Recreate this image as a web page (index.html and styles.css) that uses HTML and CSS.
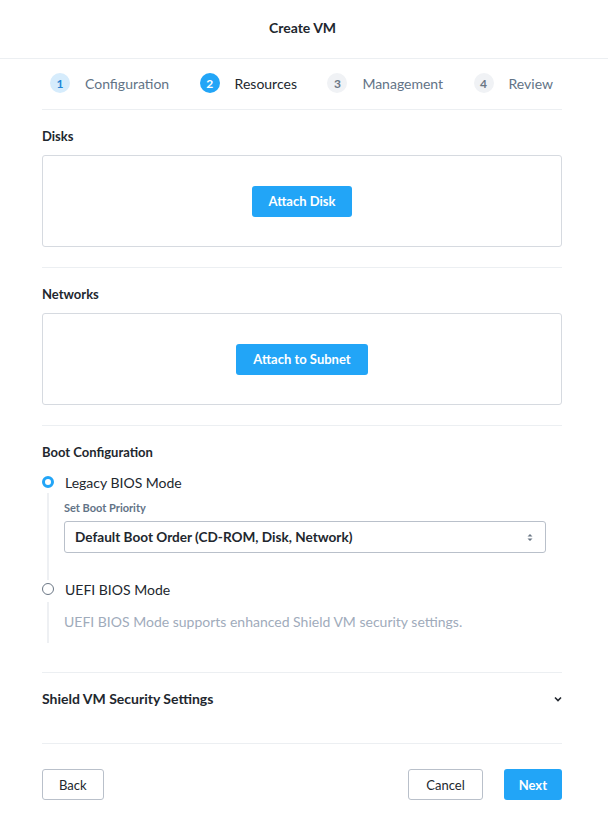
FILE: index.html
```html
<!DOCTYPE html>
<html>
<head>
<meta charset="utf-8">
<link rel="stylesheet" href="styles.css">
</head>
<body>
<div class="modal">
  <header class="title">Create VM</header>
  <div class="content">
    <nav class="steps">
      <div class="step done"><span class="num">1</span><span class="label">Configuration</span></div>
      <div class="step active"><span class="num">2</span><span class="label">Resources</span></div>
      <div class="step"><span class="num">3</span><span class="label">Management</span></div>
      <div class="step"><span class="num">4</span><span class="label">Review</span></div>
    </nav>

    <section class="section">
      <h3 class="heading">Disks</h3>
      <div class="box"><button class="btn primary">Attach Disk</button></div>
    </section>

    <section class="section">
      <h3 class="heading">Networks</h3>
      <div class="box"><button class="btn primary">Attach to Subnet</button></div>
    </section>

    <section class="section boot">
      <h3 class="heading">Boot Configuration</h3>
      <div class="radio-row"><span class="radio checked"></span><span class="radio-label">Legacy BIOS Mode</span></div>
      <div class="radio-body legacy">
        <div class="field-label">Set Boot Priority</div>
        <div class="select">
          <span>Default Boot Order (CD-ROM, Disk, Network)</span>
          <svg class="sel-arrows" width="6" height="9" viewBox="0 0 6 9"><path d="M0.5 3.5 L3 1 L5.5 3.5 Z M0.5 5.5 L3 8 L5.5 5.5 Z" fill="#6b7785"/></svg>
        </div>
      </div>
      <div class="radio-row uefi"><span class="radio"></span><span class="radio-label">UEFI BIOS Mode</span></div>
      <div class="radio-body desc">UEFI BIOS Mode supports enhanced Shield VM security settings.</div>
    </section>

    <section class="collapse">
      <span class="heading">Shield VM Security Settings</span>
      <svg class="chev" width="8" height="6" viewBox="0 0 8 6"><path d="M1 1.5 L4 4.5 L7 1.5" fill="none" stroke="#22272e" stroke-width="1.6"/></svg>
    </section>

    <footer class="footer">
      <button class="btn outline back">Back</button>
      <div class="right">
        <button class="btn outline">Cancel</button>
        <button class="btn primary next">Next</button>
      </div>
    </footer>
  </div>
</div>
</body>
</html>
```

FILE: styles.css
```css
* { box-sizing: border-box; }
html, body { margin: 0; padding: 0; background: #fff; }
body {
  font-family: Lato, "Open Sans", Arial, sans-serif;
  color: #22272e;
  font-size: 14px;
}
.modal { width: 608px; }
.title {
  height: 59px;
  border-bottom: 1px solid #eceff2;
  display: flex;
  align-items: center;
  justify-content: center;
  font-weight: 700;
  font-size: 14px;
  padding-bottom: 4px;
  padding-right: 3px;
}
.content { padding: 0 46px 0 42px; }
.steps {
  display: flex;
  justify-content: space-between;
  align-items: center;
  height: 51px;
  padding: 0 9px 2px 8px;
  border-bottom: 1px solid #eceff2;
}
.step { display: flex; align-items: center; gap: 15px; }
.num {
  width: 20px; height: 20px;
  border-radius: 50%;
  display: flex; align-items: center; justify-content: center;
  font-size: 12px; font-weight: 700;
  background: #f0f2f5; color: #6b7785;
}
.step.done .num { background: #d6ecfc; color: #1f86d6; }
.step.active .num { background: #22a5f7; color: #fff; }
.label { color: #627386; font-size: 14px; }
.step.active .label { color: #22272e; }

.section { border-bottom: 1px solid #eceff2; padding: 17px 0 20px; }
.heading { margin: 0; font-size: 13px; font-weight: 700; color: #22272e; line-height: 18px; }
.box {
  margin-top: 10px;
  height: 92px;
  border: 1px solid #d6dae0;
  border-radius: 3px;
  display: flex; align-items: center; justify-content: center;
}
.btn {
  font-family: inherit;
  font-size: 13px;
  height: 31px;
  padding: 0 17px;
  border-radius: 3px;
  cursor: pointer;
}
.btn.primary { background: #22a5f7; color: #fff; border: none; font-weight: 700; }
.btn.outline { background: #fff; color: #22272e; border: 1px solid #b9c0ca; }
.btn.back { padding: 0 16px; }
.btn.next { padding: 0 15px; }

.boot { padding-bottom: 29px; }
.radio-row { display: flex; align-items: center; gap: 11px; margin-top: 12px; height: 18px; }
.radio {
  width: 12px; height: 12px; border-radius: 50%;
  border: 1px solid #6b7785; background: #fff;
  flex: none;
}
.radio.checked { border: 3px solid #22a5f7; }
.radio-label { font-size: 14px; color: #22272e; }
.radio-body {
  margin-left: 5px;
  border-left: 2px solid #eef0f3;
  padding-left: 15px;
}
.legacy { padding-top: 8px; padding-bottom: 27px; margin-top: 2px; }
.field-label { font-size: 11px; font-weight: 700; color: #627386; line-height: 14px; }
.select {
  margin-top: 6px;
  margin-right: 16px;
  height: 32px;
  border: 1px solid #b9c0ca;
  border-radius: 3px;
  display: flex; align-items: center; justify-content: space-between;
  padding: 0 12px 0 10px;
  font-size: 13.6px; font-weight: 700; color: #22272e;
}
.uefi { margin-top: 0; }
.desc { margin-top: 4px; padding-top: 11px; padding-bottom: 13px; font-size: 14px; color: #a0abbb; line-height: 17px; }

.collapse {
  display: flex; align-items: flex-start; justify-content: space-between;
  height: 71px;
  padding-top: 17px;
  border-bottom: 1px solid #eceff2;
}
.collapse .heading { font-size: 14px; }
.chev { margin-top: 6px; margin-right: 0; }

.footer {
  display: flex; justify-content: space-between; align-items: center;
  padding-top: 25px;
}
.right { display: flex; gap: 21px; }
```
